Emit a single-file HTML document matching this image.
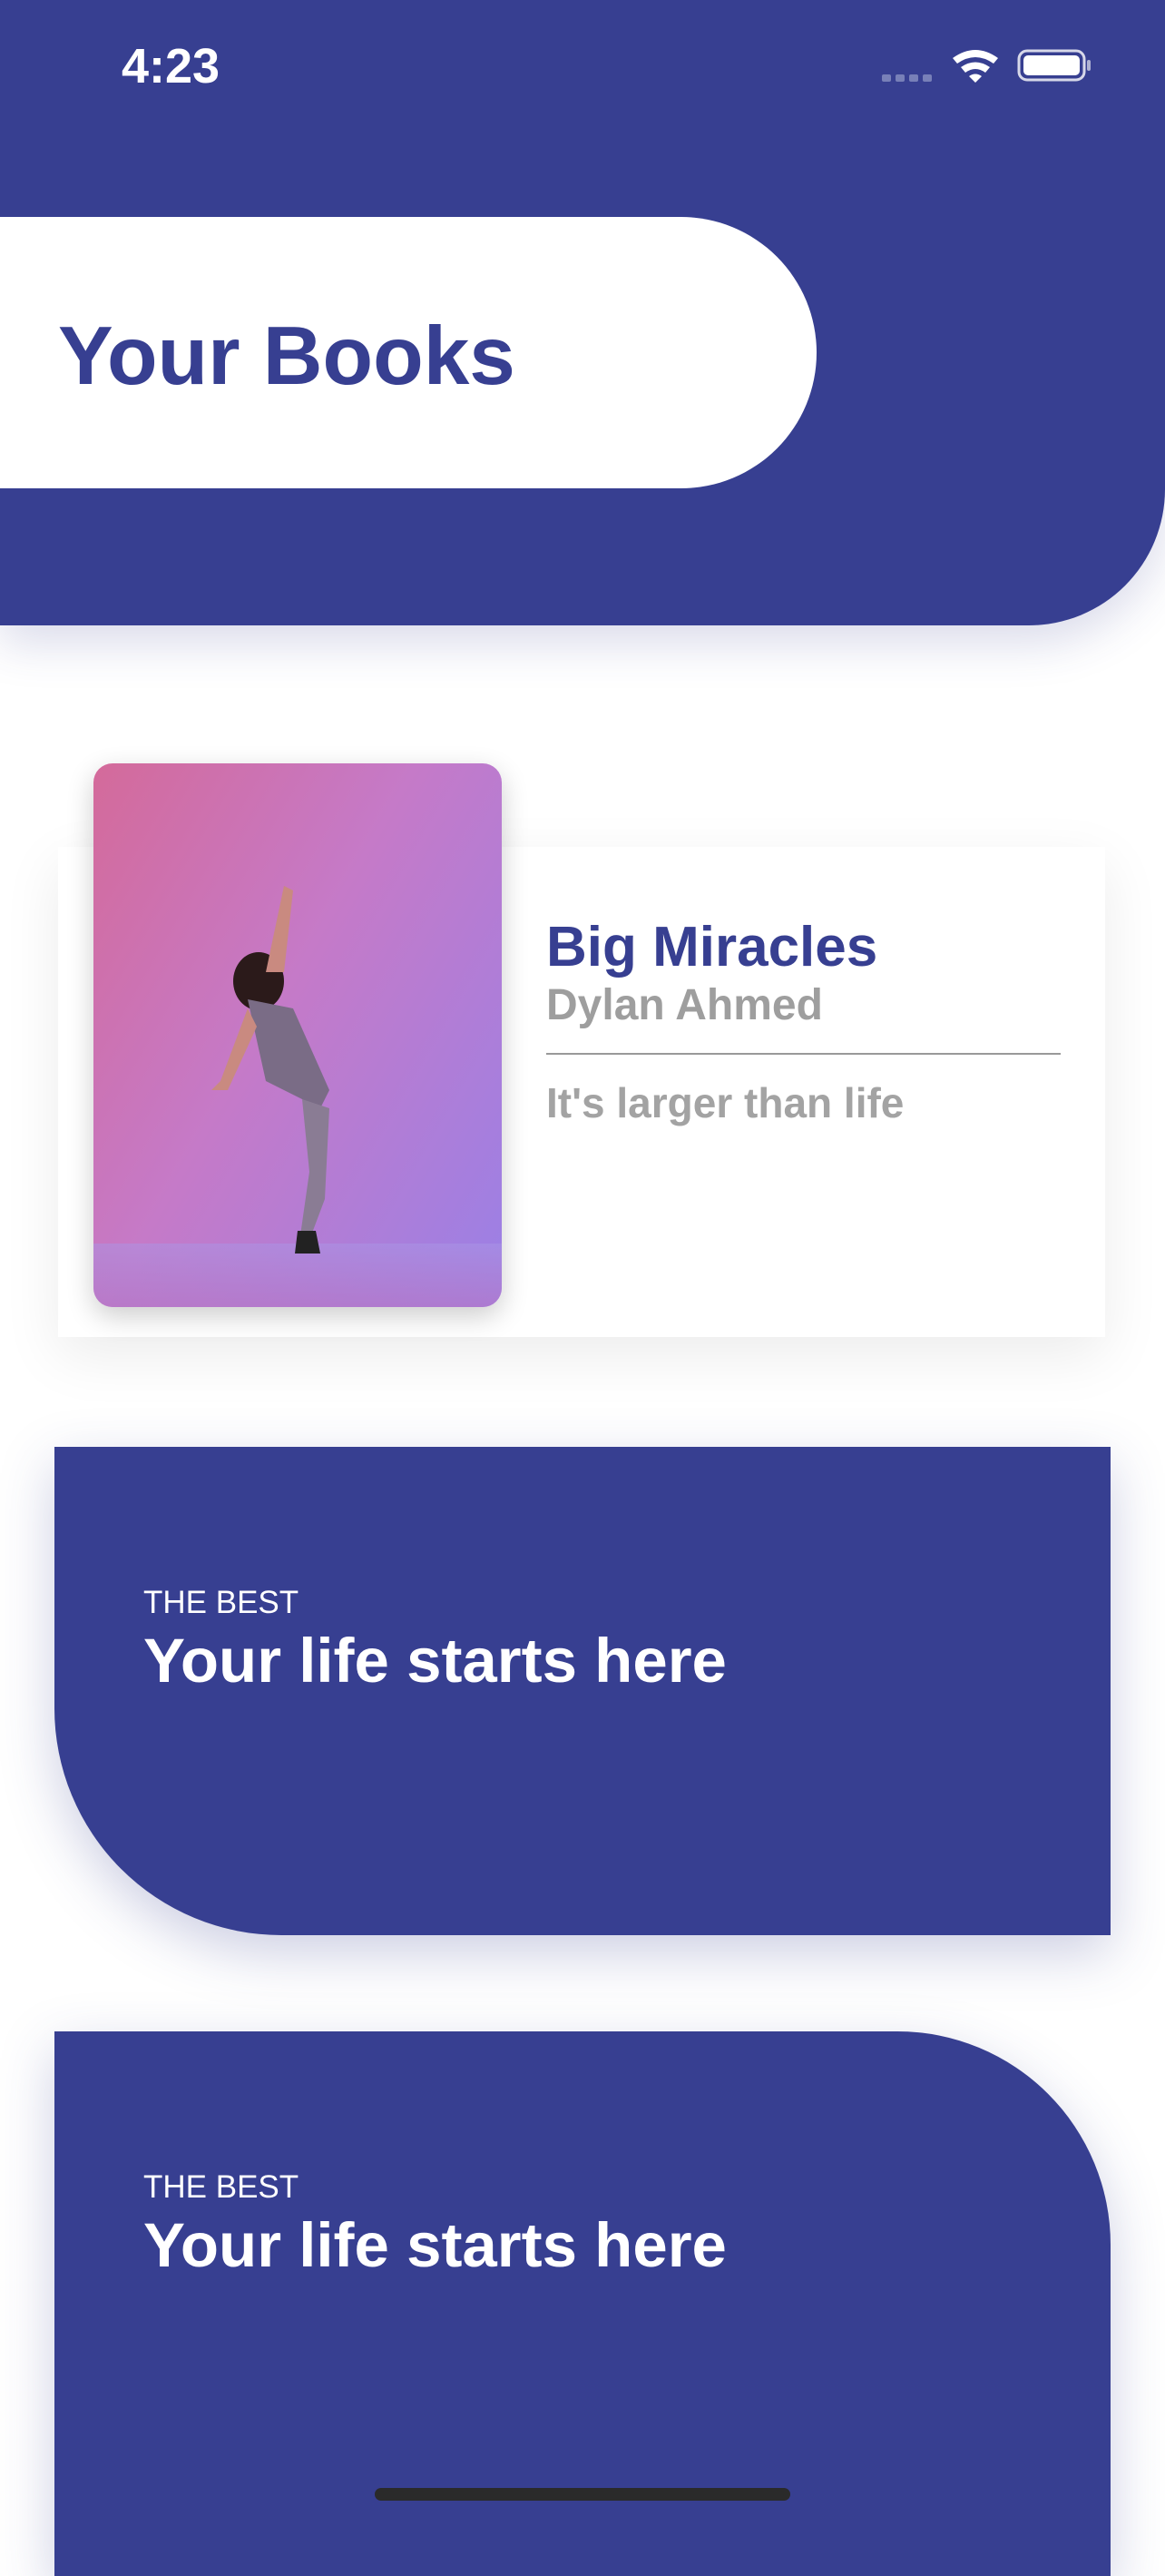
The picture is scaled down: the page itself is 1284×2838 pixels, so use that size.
<!DOCTYPE html>
<html><head><meta charset="utf-8"><style>
*{margin:0;padding:0;box-sizing:border-box}
body{width:1284px;height:2778px;background:#fff;position:relative;overflow:hidden;font-family:"Liberation Sans",sans-serif}
.hdr{position:absolute;left:0;top:0;width:1284px;height:689px;background:#373F91;border-bottom-right-radius:150px;box-shadow:0 20px 50px rgba(55,63,145,0.18)}
.time{position:absolute;left:134px;top:42px;color:#fff;font-size:54px;font-weight:600}
.pill{position:absolute;left:0;top:239px;width:900px;height:299px;background:#fff;border-radius:0 150px 150px 0}
.pill span{position:absolute;left:64px;top:102px;font-size:91px;font-weight:bold;color:#373F91}
.card{position:absolute;left:64px;top:933px;width:1154px;height:540px;background:#fff;box-shadow:0 20px 60px rgba(0,0,0,0.08)}
.img{position:absolute;left:103px;top:841px;width:450px;height:599px;border-radius:21px;background:linear-gradient(120deg,#d46a9a 0%,#c57ac8 45%,#9a80e6 100%);box-shadow:0 10px 30px rgba(0,0,0,0.2);overflow:hidden}
.floor{position:absolute;left:0;bottom:0;width:100%;height:70px;background:linear-gradient(180deg,rgba(170,150,230,.5),rgba(180,120,200,.7))}
.t1{position:absolute;left:602px;top:1008px;font-size:62px;font-weight:bold;color:#373F91}
.t2{position:absolute;left:602px;top:1080px;font-size:48px;font-weight:bold;color:#9e9e9e}
.line{position:absolute;left:602px;top:1160px;width:567px;height:2px;background:#999}
.t3{position:absolute;left:602px;top:1188px;font-size:46px;font-weight:bold;color:#a3a3a3}
.b{position:absolute;left:60px;width:1164px;background:#373F91;box-shadow:0 20px 60px rgba(55,63,145,0.25)}
.b1{top:1594px;height:538px;border-bottom-left-radius:250px}
.b2{top:2238px;height:600px;border-top-right-radius:235px}
.b .s{position:absolute;left:98px;top:152px;color:#fff;font-size:35px}
.b .l{position:absolute;left:98px;top:196px;color:#fff;font-size:69px;font-weight:bold}
.home{position:absolute;left:413px;top:2741px;width:458px;height:14px;border-radius:7px;background:#2a2a2a}
</style></head><body>
<div class="hdr"></div>
<div class="time">4:23</div>
<svg style="position:absolute;left:970px;top:52px" width="236" height="40" viewBox="0 0 236 40">
<g fill="#7880b8"><rect x="2" y="30" width="10" height="8" rx="2"/><rect x="17" y="30" width="10" height="8" rx="2"/><rect x="32" y="30" width="10" height="8" rx="2"/><rect x="47" y="30" width="10" height="8" rx="2"/></g>
<path d="M80 12 Q105 -6 130 12 L125 18 Q105 4 85 18Z M89 22 Q105 11 121 22 L116 28 Q105 20 94 28Z M98 32 Q105 27 112 32 L105 39Z" fill="#fff"/>
<rect x="153" y="4" width="72" height="32" rx="9" fill="none" stroke="#fff" stroke-width="3" opacity=".8"/>
<rect x="158" y="9" width="62" height="22" rx="5" fill="#fff"/>
<rect x="228" y="14" width="4" height="12" rx="2" fill="#fff" opacity=".6"/>
</svg>
<div class="pill"><span>Your Books</span></div>
<div class="card"></div>
<div class="img"><div class="floor"></div>
<svg style="position:absolute;left:110px;top:120px" width="200" height="420" viewBox="0 0 200 420">
<ellipse cx="72" cy="120" rx="28" ry="32" fill="#2b1a1a"/>
<path d="M80 110 L100 15 L110 20 L100 110Z" fill="#c98a80"/>
<path d="M60 140 L110 150 L150 240 L140 260 L80 230Z" fill="#7a6c86"/>
<path d="M60 150 L30 230 L20 240 L38 240 L70 170Z" fill="#c98a80"/>
<path d="M120 250 L150 260 L145 360 L130 400 L118 400 L128 330Z" fill="#8a7c94"/>
<path d="M115 395 L135 395 L140 420 L112 420Z" fill="#222"/>
</svg></div>
<div class="t1">Big Miracles</div>
<div class="t2">Dylan Ahmed</div>
<div class="line"></div>
<div class="t3">It's larger than life</div>
<div class="b b1"><div class="s">THE BEST</div><div class="l">Your life starts here</div></div>
<div class="b b2"><div class="s">THE BEST</div><div class="l">Your life starts here</div></div>
<div class="home"></div>
</body></html>
